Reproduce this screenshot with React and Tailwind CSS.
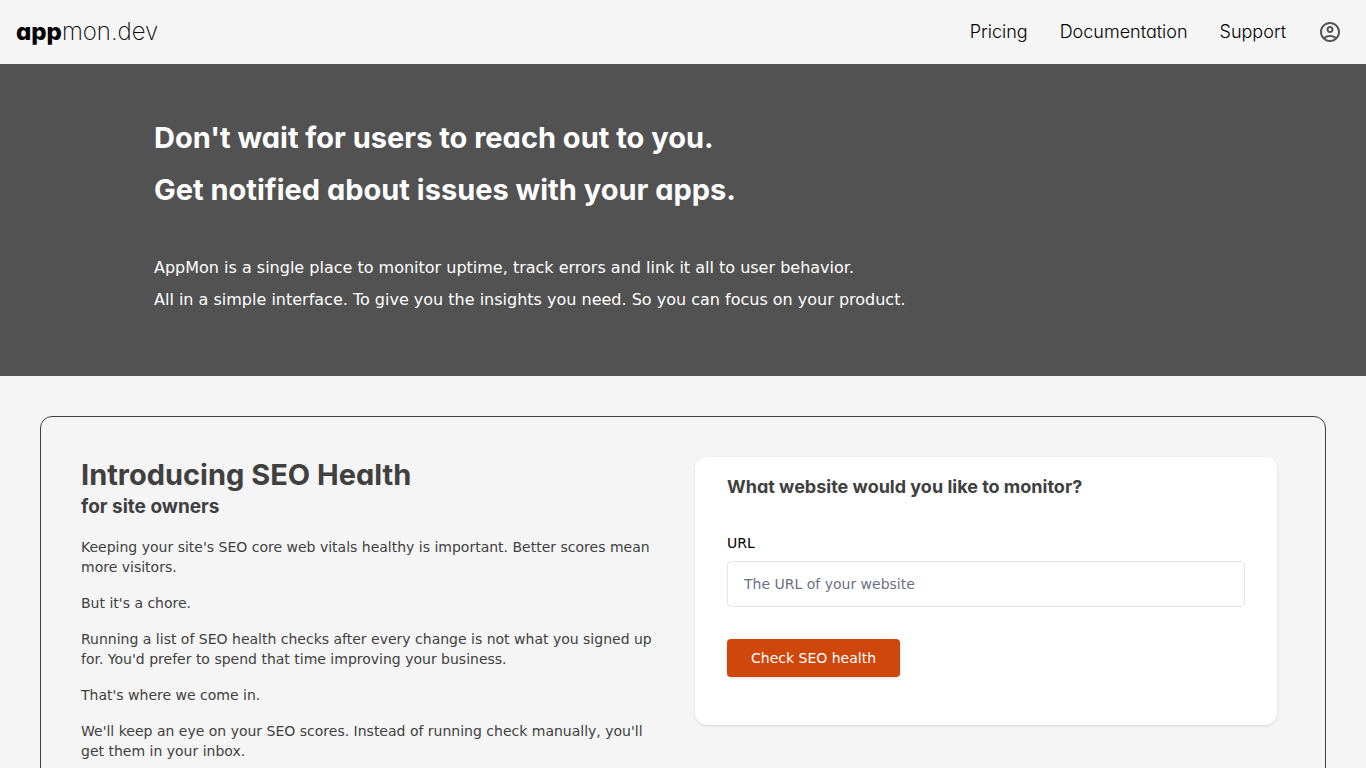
import React, { useState } from 'react';

const navLinks = [
  { id: 'pricing', title: 'Pricing' },
  { id: 'documentation', title: 'Documentation' },
  { id: 'support', title: 'Support' },
];

const paragraphs = [
  "Keeping your site's SEO core web vitals healthy is important. Better scores mean more visitors.",
  "But it's a chore.",
  "Running a list of SEO health checks after every change is not what you signed up for. You'd prefer to spend that time improving your business.",
  "That's where we come in.",
  "We'll keep an eye on your SEO scores. Instead of running check manually, you'll get them in your inbox.",
];

// cv11 is Inter's single-storey "a"
const displayFont = "font-['Inter',sans-serif] [font-feature-settings:'cv11']";

const AccountIcon = () => (
  <svg viewBox="0 0 24 24" className="w-6 h-6" fill="currentColor" aria-hidden="true">
    <path d="M12 2C6.48 2 2 6.48 2 12s4.48 10 10 10 10-4.48 10-10S17.52 2 12 2zM7.35 18.5C8.66 17.56 10.26 17 12 17s3.34.56 4.65 1.5C15.34 19.44 13.74 20 12 20s-3.34-.56-4.65-1.5zm10.79-1.38C16.45 15.8 14.32 15 12 15s-4.45.8-6.14 2.12C4.7 15.73 4 13.95 4 12c0-4.42 3.58-8 8-8s8 3.58 8 8c0 1.95-.7 3.73-1.86 5.12z" />
    <path d="M12 6c-1.93 0-3.5 1.57-3.5 3.5S10.07 13 12 13s3.5-1.57 3.5-3.5S13.93 6 12 6zm0 5c-.83 0-1.5-.67-1.5-1.5S11.17 8 12 8s1.5.67 1.5 1.5S12.83 11 12 11z" />
  </svg>
);

const Header = () => (
  <header className={`flex h-16 items-center justify-between pl-4 pr-6 text-black ${displayFont}`}>
    <a href="#home" className="text-2xl font-extralight">
      <span className="font-extrabold">app</span>mon.dev
    </a>
    <nav className="flex items-center gap-8 text-lg font-light">
      {navLinks.map((link) => (
        <a key={link.id} href={`#${link.id}`}>
          {link.title}
        </a>
      ))}
      <button type="button" aria-label="Account" className="text-neutral-600">
        <AccountIcon />
      </button>
    </nav>
  </header>
);

const Hero = () => (
  <section className="bg-[#525252] px-8 pt-12 pb-15 text-white">
    <div className="mx-auto max-w-[1058px]">
      <h1 className={`text-[29px]/[52px] font-bold ${displayFont}`}>
        Don't wait for users to reach out to you.
        <br />
        Get notified about issues with your apps.
      </h1>
      <p className="mt-9 text-base/8">
        AppMon is a single place to monitor uptime, track errors and link it all to user behavior.
        <br />
        All in a simple interface. To give you the insights you need. So you can focus on your product.
      </p>
    </div>
  </section>
);

const SeoForm = () => {
  const [url, setUrl] = useState('');

  return (
    <form
      className="self-start rounded-xl bg-white px-8 pt-4 pb-12 shadow"
      onSubmit={(e) => e.preventDefault()}
    >
      <h3 className={`text-lg font-bold ${displayFont}`}>What website would you like to monitor?</h3>
      <label htmlFor="url" className="mt-8 block text-sm text-black">
        URL
      </label>
      <input
        id="url"
        type="text"
        value={url}
        onChange={(e) => setUrl(e.target.value)}
        placeholder="The URL of your website"
        className="mt-2 block w-full rounded border border-neutral-200 px-4 py-3 text-sm text-black placeholder:text-gray-500"
      />
      <button
        type="submit"
        className="mt-8 rounded bg-[#d0470c] px-6 py-2 text-sm/[22px] text-white shadow"
      >
        Check SEO health
      </button>
    </form>
  );
};

const App = () => {
  return (
    <div className="min-h-screen bg-neutral-100 font-['DejaVu_Sans',sans-serif] text-neutral-700">
      <Header />
      <Hero />
      <main className="p-10">
        <section className="grid grid-cols-2 gap-8 rounded-xl border border-neutral-700 py-10 pl-10 pr-12">
          <div>
            <h2 className={`text-[29px]/9 font-bold ${displayFont}`}>Introducing SEO Health</h2>
            <h3 className={`text-[19px]/7 font-bold ${displayFont}`}>for site owners</h3>
            <div className="mt-4 space-y-4 text-sm">
              {paragraphs.map((text) => (
                <p key={text}>{text}</p>
              ))}
            </div>
          </div>
          <SeoForm />
        </section>
      </main>
    </div>
  );
};

export default App;
